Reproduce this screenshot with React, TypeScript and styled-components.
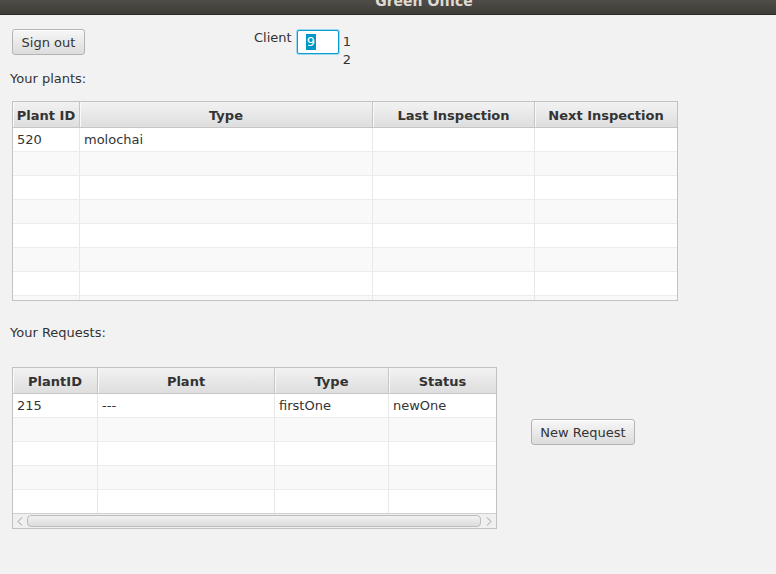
import styled, { createGlobalStyle } from "styled-components";

const GlobalStyle = createGlobalStyle`
    html, body {
        margin: 0;
        padding: 0;
        background: #f2f2f2;
    }
    body {
        font-family: "DejaVu Sans", "Liberation Sans", sans-serif;
        font-size: 13px;
        color: #333333;
    }
`

const Window = styled.div`
    width: 776px;
    height: 574px;
    overflow: hidden;
    background: #f2f2f2;
    display: flex;
    flex-direction: column;
`

const TitleBar = styled.div`
    height: 14px;
    flex-shrink: 0;
    background: linear-gradient(#504d48, #3e3c38);
    border-bottom: 1px solid #2b2a27;
    overflow: hidden;
    display: flex;
    justify-content: center;
    padding-left: 72px;
`

const TitleText = styled.span`
    color: #dfdbd2;
    font-weight: bold;
    font-size: 14px;
    line-height: 14px;
    margin-top: -6px;
`

const Content = styled.div`
    display: flex;
    flex-direction: column;
    padding: 14px 0 0 10px;
`

const TopRow = styled.div`
    display: flex;
    align-items: flex-start;
    height: 26px;
`

const Button = styled.button`
    font-family: "DejaVu Sans", "Liberation Sans", sans-serif;
    font-size: 13px;
    color: #333333;
    height: 26px;
    padding: 0 8px;
    border: 1px solid #b3b3b3;
    border-radius: 3px;
    background: linear-gradient(#f7f7f7, #dcdcdc);
    box-shadow: inset 0 1px 0 #ffffff;
    cursor: pointer;
`

const SignOut = styled(Button)`
    margin-left: 2px;
    width: 73px;
`

const ClientLabel = styled.span`
    margin-left: 169px;
    margin-top: 1px;
    line-height: 16px;
`

const ClientField = styled.div`
    margin-left: 5px;
    height: 22px;
    width: 32px;
    border: 1px solid #0b9cd6;
    border-radius: 2px;
    box-shadow: 0 0 0 1px #9ed7ee;
    background: #ffffff;
    display: flex;
    align-items: center;
    padding-left: 8px;
    margin-top: 1px;
`

const Selected = styled.span`
    background: #0096c9;
    color: #ffffff;
    line-height: 16px;
    padding: 0 1px;
`

const ClientList = styled.div`
    margin-left: 4px;
    margin-top: 4px;
    display: flex;
    flex-direction: column;
    line-height: 18px;
`

const Label = styled.div`
    line-height: 16px;
`

const PlantsLabel = styled(Label)`
    margin-top: 16px;
`

const RequestsLabel = styled(Label)`
    margin-top: 24px;
`

const Table = styled.div<{ $width: number; $top?: number }>`
    width: ${p => p.$width}px;
    margin-left: 2px;
    margin-top: ${p => p.$top ?? 0}px;
    border: 1px solid #c2c2c2;
    background: #ffffff;
    display: flex;
    flex-direction: column;
`

const HeaderRow = styled.div<{ $cols: string }>`
    display: grid;
    grid-template-columns: ${p => p.$cols};
    height: 25px;
    background: linear-gradient(#f2f2f2, #dedede);
    border-bottom: 1px solid #c6c6c6;
`

const HeaderCell = styled.div`
    font-weight: bold;
    color: #333333;
    display: flex;
    align-items: center;
    justify-content: center;
    padding-top: 1px;
    border-right: 1px solid #c6c6c6;
    box-shadow: inset 1px 0 0 #f9f9f9;
    &:last-child {
        border-right: none;
    }
`

const Body = styled.div<{ $height: number }>`
    height: ${p => p.$height}px;
    overflow: hidden;
`

const Row = styled.div<{ $cols: string; $odd: boolean }>`
    display: grid;
    grid-template-columns: ${p => p.$cols};
    height: 23px;
    border-bottom: 1px solid #ececec;
    background: ${p => (p.$odd ? "#f9f9f9" : "#ffffff")};
`

const Cell = styled.div`
    padding-left: 4px;
    display: flex;
    align-items: center;
    border-right: 1px solid #e8e8e8;
    white-space: nowrap;
    overflow: hidden;
    &:last-child {
        border-right: none;
    }
`

const RequestsRow = styled.div`
    display: flex;
    align-items: flex-start;
    margin-top: 26px;
`

const ScrollBar = styled.div`
    height: 14px;
    border-top: 1px solid #cfcfcf;
    background: #f0f0f0;
    display: flex;
    align-items: center;
`

const Arrow = styled.span`
    width: 14px;
    display: flex;
    justify-content: center;
`

const Thumb = styled.div`
    flex: 1;
    height: 10px;
    border: 1px solid #bcbcbc;
    border-radius: 4px;
    background: linear-gradient(#f2f2f2, #dcdcdc);
    margin: 0 1px 0 0;
`

const NewRequest = styled(Button)`
    margin-left: 34px;
    margin-top: 52px;
    width: 104px;
`

const plantCols = "67px 293px 162px 1fr";
const requestCols = "85px 177px 114px 1fr";

const plants = [["520", "molochai", "", ""]];
const requests = [["215", "---", "firstOne", "newOne"]];

function Chevron({ dir }: { dir: "left" | "right" }) {
    return (
        <svg width="6" height="9" viewBox="0 0 6 9">
            <path
                d={dir === "left" ? "M5 0.5 L1 4.5 L5 8.5" : "M1 0.5 L5 4.5 L1 8.5"}
                fill="none"
                stroke="#9a9a9a"
                strokeWidth="1"
            />
        </svg>
    );
}

function App() {
    const plantRows = Array.from({ length: 8 }, (_, i) => plants[i] || ["", "", "", ""]);
    const requestRows = Array.from({ length: 5 }, (_, i) => requests[i] || ["", "", "", ""]);

    return (
        <Window>
            <GlobalStyle />
            <TitleBar>
                <TitleText>Green Office</TitleText>
            </TitleBar>
            <Content>
                <TopRow>
                    <SignOut>Sign out</SignOut>
                    <ClientLabel>Client</ClientLabel>
                    <ClientField>
                        <Selected>9</Selected>
                    </ClientField>
                    <ClientList>
                        <span>1</span>
                        <span>2</span>
                    </ClientList>
                </TopRow>
                <PlantsLabel>Your plants:</PlantsLabel>
                <Table $width={664} $top={14}>
                    <HeaderRow $cols={plantCols}>
                        <HeaderCell>Plant ID</HeaderCell>
                        <HeaderCell>Type</HeaderCell>
                        <HeaderCell>Last Inspection</HeaderCell>
                        <HeaderCell>Next Inspection</HeaderCell>
                    </HeaderRow>
                    <Body $height={172}>
                        {plantRows.map((r, idx) => (
                            <Row key={idx} $cols={plantCols} $odd={idx % 2 === 1}>
                                {r.map((c, j) => <Cell key={j}>{c}</Cell>)}
                            </Row>
                        ))}
                    </Body>
                </Table>
                <RequestsLabel>Your Requests:</RequestsLabel>
                <RequestsRow>
                    <Table $width={483}>
                        <HeaderRow $cols={requestCols}>
                            <HeaderCell>PlantID</HeaderCell>
                            <HeaderCell>Plant</HeaderCell>
                            <HeaderCell>Type</HeaderCell>
                            <HeaderCell>Status</HeaderCell>
                        </HeaderRow>
                        <Body $height={119}>
                            {requestRows.map((r, idx) => (
                                <Row key={idx} $cols={requestCols} $odd={idx % 2 === 1}>
                                    {r.map((c, j) => <Cell key={j}>{c}</Cell>)}
                                </Row>
                            ))}
                        </Body>
                        <ScrollBar>
                            <Arrow><Chevron dir="left" /></Arrow>
                            <Thumb />
                            <Arrow><Chevron dir="right" /></Arrow>
                        </ScrollBar>
                    </Table>
                    <NewRequest>New Request</NewRequest>
                </RequestsRow>
            </Content>
        </Window>
    );
}

export default App;
